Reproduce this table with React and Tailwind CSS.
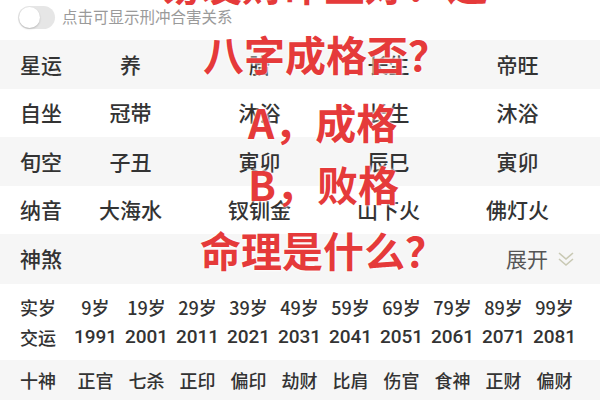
import React from "react";

const font = { fontFamily: '"Noto Sans CJK SC", "Noto Sans", sans-serif' };

const rows = [
  { label: "星运", cells: ["养", "胎", "长生", "帝旺"], bg: "bg-[#f6f6f6]" },
  { label: "自坐", cells: ["冠带", "沐浴", "长生", "沐浴"], bg: "bg-white" },
  { label: "旬空", cells: ["子丑", "寅卯", "辰巳", "寅卯"], bg: "bg-[#f6f6f6]" },
  { label: "纳音", cells: ["大海水", "钗钏金", "山下火", "佛灯火"], bg: "bg-white" },
];

const ages = ["9岁", "19岁", "29岁", "39岁", "49岁", "59岁", "69岁", "79岁", "89岁", "99岁"];
const years = ["1991", "2001", "2011", "2021", "2031", "2041", "2051", "2061", "2071", "2081"];
const gods = ["正官", "七杀", "正印", "偏印", "劫财", "比肩", "伤官", "食神", "正财", "偏财"];

const redLines = [
  { text: "易发财命主好？这", top: -37, left: 160 },
  { text: "八字成格否？", top: 33, left: 203 },
  { text: "A，成格", top: 101, left: 248 },
  { text: "B，败格", top: 163, left: 248 },
  { text: "命理是什么？", top: 229, left: 200 },
];

function Toggle() {
  return (
    <div className="relative w-[37px] h-[23px] rounded-full bg-[#e6e6e6]">
      <div className="absolute left-[1px] top-[1px] w-[21px] h-[21px] rounded-full bg-white shadow-[0_1px_2px_rgba(0,0,0,0.2)]" />
    </div>
  );
}

export default function App() {
  return (
    <div className="relative w-[600px] h-[400px] overflow-hidden bg-white text-[#333]" style={font}>
      <div className="h-[40px] flex items-center gap-[7px] pl-[18px] pb-[6px]">
        <Toggle />
        <span className="text-[15.5px] text-[#9a9a9a]">点击可显示刑冲合害关系</span>
      </div>

      {rows.map((r) => (
        <div key={r.label} className={`h-[48.5px] flex items-center pl-[20px] ${r.bg}`}>
          <div className="w-[46px] text-[21px] font-medium">{r.label}</div>
          {r.cells.map((c, i) => (
            <div key={i} className="w-[129px] text-center text-[21px] font-medium">{c}</div>
          ))}
        </div>
      ))}

      <div className="h-[50px] flex items-center pl-[20px] pr-[24px] bg-[#f6f6f6]">
        <div className="flex-1 text-[21px] font-medium">神煞</div>
        <span className="text-[21px] text-[#555]">展开</span>
        <svg width="20" height="20" viewBox="0 0 20 20" className="ml-[8px]" fill="none" stroke="#c9c9b4" strokeWidth="1.6">
          <path d="M3 4 L10 10 L17 4" />
          <path d="M3 10 L10 16 L17 10" />
        </svg>
      </div>

      <div className="h-[76px] flex flex-col justify-center gap-[6px] pl-[20px] bg-white">
        <div className="flex items-center h-[24px]">
          <div className="w-[50px] text-[18px] font-medium">实岁</div>
          {ages.map((a) => (
            <div key={a} className="w-[51px] text-center text-[18px] font-medium">{a}</div>
          ))}
        </div>
        <div className="flex items-center h-[24px]">
          <div className="w-[50px] text-[18px] font-medium">交运</div>
          {years.map((y) => (
            <div key={y} className="w-[51px] text-center text-[19px] font-medium" style={{ fontFamily: 'Roboto, "Noto Sans CJK SC", sans-serif' }}>{y}</div>
          ))}
        </div>
      </div>

      <div className="h-[41px] flex items-center pl-[20px] bg-[#f6f6f6]">
        <div className="w-[50px] text-[18px] font-medium">十神</div>
        {gods.map((g, i) => (
          <div key={i} className="w-[51px] text-center text-[18px] font-medium">{g}</div>
        ))}
      </div>

      {redLines.map((l) => (
        <div
          key={l.text}
          className="absolute whitespace-nowrap text-[41px] font-bold leading-none text-[#e53a3a] [text-shadow:0_0_3px_#fff,0_0_3px_#fff]"
          style={{ top: l.top, left: l.left }}
        >
          {l.text}
        </div>
      ))}
    </div>
  );
}
